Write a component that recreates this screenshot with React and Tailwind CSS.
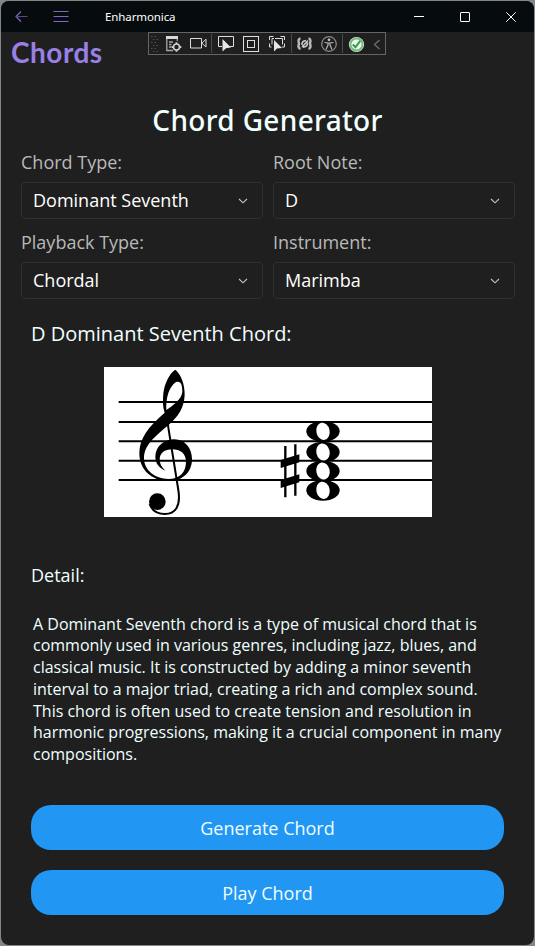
import React from "react";

function Chevron() {
  return (
    <svg width="10" height="6" viewBox="0 0 10 6" fill="none" stroke="#c4c4c4" strokeWidth="1.1">
      <path d="M1 1L5 4.8L9 1" />
    </svg>
  );
}

function Picker({ label, value }) {
  return (
    <div className="flex h-20 flex-col">
      <div className="h-[30px] text-[18px] leading-[20px] text-[#b9b9b9]">{label}</div>
      <div className="flex h-[37px] items-center justify-between rounded-[4px] border border-[#303030] bg-[#1f1f1f] pr-[14px] pl-[11px] text-[18px] leading-[24px] text-white">
        <span className="pb-[2px]">{value}</span>
        <Chevron />
      </div>
    </div>
  );
}

function WholeNote({ y }) {
  return (
    <g transform={`translate(684 ${y})`}>
      <ellipse rx="50" ry="31" fill="#000" />
      <ellipse rx="20" ry="26" fill="#fff" transform="rotate(-12)" />
    </g>
  );
}

function Staff() {
  return (
    <svg className="block bg-white" width="328" height="150" viewBox="27 21 984 450">
      <g stroke="#000" strokeWidth="6">
        <path d="M71 126H1011M71 186H1011M71 244H1011M71 302H1011M71 360H1011" />
      </g>
      <path
        fillRule="evenodd"
        d="M211 332C190 322 181 308 181 290C181 258 208 238 238 238C270 238 291 265 291 298C291 335 265 363 222 363C170 363 133 330 133 280C133 235 160 200 209 158C203 140 203 125 205 100C209 70 222 42 241 29C258 42 270 75 269 105C267 145 250 168 220 196C180 230 147 255 147 295C147 330 180 357 220 357C255 357 273 335 273 305C273 280 255 268 232 268C208 268 194 280 194 298C194 312 200 322 211 332ZM214 150C212 115 222 80 243 66C258 62 262 75 262 95C260 118 235 135 214 150Z"
      />
      <path d="M218 190L250 390C258 440 240 462 210 462C185 462 170 450 164 432" fill="none" stroke="#000" strokeWidth="6" />
      <circle cx="187" cy="425" r="25" />
      <WholeNote y={214} />
      <WholeNote y={276} />
      <WholeNote y={333} />
      <WholeNote y={391} />
      <path d="M571 258V412M601 253V407" stroke="#000" strokeWidth="7" />
      <path d="M557 300L613 283V307L557 324ZM557 360L613 343V367L557 384Z" />
    </svg>
  );
}

function DebugToolbar() {
  return (
    <svg className="absolute top-[31px] left-[147px]" width="238" height="23" viewBox="0 0 238 23" fill="none">
      <rect x="0.5" y="0.5" width="237" height="22" fill="#1f1f1f" stroke="#656565" />
      <path d="M3 4.5H10M5 7.5H10M3 10.5H10M5 13.5H10M3 16.5H10M5 19.5H10" stroke="#505050" strokeDasharray="1.5 2" />
      {/* live visual tree */}
      <path d="M18 4H30V7H18Z" fill="#d8d8d8" />
      <path d="M18.8 7V18.5H25M29.3 7V9M21 10H25M21 12.5H23.5M21 15H23.5" stroke="#a8a8a8" strokeWidth="1.3" />
      <circle cx="28.5" cy="15" r="3" stroke="#cfcfcf" strokeWidth="1.6" />
      <path d="M28.5 10.2V12M28.5 18V19.8M23.7 15H25.5M31.5 15H33.3" stroke="#cfcfcf" strokeWidth="1.8" />
      {/* camera */}
      <path d="M42.5 6.5H53.5V16H42.5ZM54 11L58 7.2V15L54 11.3" stroke="#dcdcdc" />
      <path d="M63.5 2V21M143.5 2V21M194.5 2V21" stroke="#4b4b4b" />
      {/* select element */}
      <path d="M74 14.5H70.5V4.5H85.5V14.5H82" stroke="#e0e0e0" />
      <path d="M74.5 7V19.5L78 16.2L83 15.5Z" fill="#e6e6e6" />
      {/* layout adorners */}
      <rect x="95.5" y="4.5" width="15" height="15" stroke="#e0e0e0" />
      <rect x="99.5" y="8.5" width="7" height="7" stroke="#e0e0e0" />
      {/* track focus */}
      <path d="M121.5 8V4.5H125.5M132.5 4.5H136.5V8M121.5 11.5V15H123.5M136.5 11.5V15H134M127 6.5H134.5V12.5M124 12.5V6.5H126" stroke="#dedede" />
      <path d="M126 8V19.5L129 16.5L134 16Z" fill="#e6e6e6" />
      {/* binding failures */}
      <path d="M152.5 6.5Q149.5 7 151 11.5Q149.5 16 152.5 17M160.5 6.5Q163.5 7 162 11.5Q163.5 16 160.5 17" stroke="#b8b8b8" strokeWidth="2.4" />
      <path d="M154 13Q153.5 9 158 8.5M159.5 10.5Q159.8 15 155 15.2M154 15L160 8.5" stroke="#c8c8c8" strokeWidth="1.6" />
      {/* accessibility */}
      <circle cx="181" cy="12" r="7.3" stroke="#8c8c8c" strokeWidth="1.2" />
      <circle cx="181" cy="7.8" r="1.4" fill="#c2c2c2" />
      <path d="M176.5 10.5L180 11V13L178 17.5M185.5 10.5L182 11V13L184 17.5M180 11H182" stroke="#b4b4b4" strokeWidth="1.2" />
      {/* hot reload status */}
      <circle cx="208.5" cy="12.5" r="7.6" fill="#dfe9df" />
      <circle cx="208.5" cy="12.5" r="6" fill="#f2f6f2" stroke="#6fbd78" strokeWidth="1.8" />
      <path d="M204.8 12.5L207.5 15.3L212.2 8.8" stroke="#359b45" strokeWidth="2" />
      <path d="M231.5 8L226.5 12.5L231.5 17" stroke="#707070" strokeWidth="1.2" />
    </svg>
  );
}

export default function App() {
  return (
    <div className="h-[946px] w-[535px] bg-[#858585] p-px font-['Open_Sans','Noto_Sans',sans-serif]">
      <div className="relative flex h-[944px] w-[533px] flex-col overflow-hidden rounded-[8px] bg-[#1f1f1f]">
        <header className="flex h-[31px] shrink-0 items-center bg-[#060b0e]">
          <svg className="ml-[14px]" width="13" height="11" viewBox="0 0 13 11" fill="none" stroke="#7f68c2">
            <path d="M6 0.5L1 5.5L6 10.5" strokeWidth="1.2" />
            <path d="M1 5.5H12.5" stroke="#594a86" strokeWidth="1.2" />
          </svg>
          <svg className="ml-[25px]" width="16" height="11" viewBox="0 0 16 11" stroke="#7f68c2">
            <path d="M0.5 0.5H15.5M0.5 5.5H15.5M0.5 10.5H15.5" />
          </svg>
          <span className="ml-[36px] pt-px font-['Noto_Sans'] text-[11.5px] leading-[16px] tracking-[-0.1px] text-white">Enharmonica</span>
          <div className="mr-[18px] ml-auto flex items-center gap-9">
            <svg width="10" height="11" viewBox="0 0 10 11" stroke="#fff"><path d="M0 5.5H10" /></svg>
            <svg width="10" height="10" viewBox="0 0 10 10" fill="none" stroke="#fff"><rect x="0.5" y="0.5" width="9" height="9" rx="0.5" /></svg>
            <svg width="10" height="10" viewBox="0 0 10 10" stroke="#fff"><path d="M0.3 0.3L9.7 9.7M9.7 0.3L0.3 9.7" /></svg>
          </div>
        </header>
        <DebugToolbar />
        <div className="h-[72px] shrink-0 pl-[10px] font-['Lato',sans-serif] text-[28px] leading-[40px] font-bold tracking-[0.5px] text-[#9880e5]">Chords</div>
        <h1 className="h-[48px] shrink-0 text-center font-['Noto_Sans'] text-[28px] leading-[33px] font-medium tracking-[0.33px] text-[#f0ffff]">Chord Generator</h1>
        <section className="grid shrink-0 grid-cols-2 gap-x-[10px] pr-[19px] pl-5">
          <Picker label="Chord Type:" value="Dominant Seventh" />
          <Picker label="Root Note:" value="D" />
          <Picker label="Playback Type:" value="Chordal" />
          <Picker label="Instrument:" value="Marimba" />
        </section>
        <h2 className="mt-[7px] h-[48px] shrink-0 pl-[30px] text-[20px] leading-[30px] text-[#f0ffff]">D Dominant Seventh Chord:</h2>
        <div className="shrink-0 pl-[103px]"><Staff /></div>
        <h3 className="mt-[46px] shrink-0 pl-[30px] text-[18px] leading-[25px] text-[#f0ffff]">Detail:</h3>
        <div className="mt-[25.5px] shrink-0 pl-8 text-[16px] leading-[21.8px] whitespace-nowrap text-[#f0ffff]">
          A Dominant Seventh chord is a type of musical chord that is<br />
          commonly used in various genres, including jazz, blues, and<br />
          classical music. It is constructed by adding a minor seventh<br />
          interval to a major triad, creating a rich and complex sound.<br />
          This chord is often used to create tension and resolution in<br />
          harmonic progressions, making it a crucial component in many<br />
          compositions.
        </div>
        <div className="mt-auto mb-[30px] flex shrink-0 flex-col gap-5 pr-[30px] pl-[30px]">
          <button className="h-[45px] rounded-[20px] bg-[#2196f3] pt-[2px] text-[18px] text-[#f0ffff]">Generate Chord</button>
          <button className="h-[45px] rounded-[20px] bg-[#2196f3] pt-[2px] text-[18px] text-[#f0ffff]">Play Chord</button>
        </div>
      </div>
    </div>
  );
}
